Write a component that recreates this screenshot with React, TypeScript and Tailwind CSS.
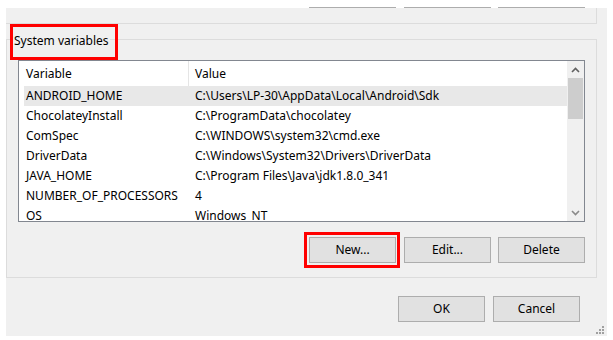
import React from "react";

const rows: [string, string][] = [
  ["ANDROID_HOME", "C:\\Users\\LP-30\\AppData\\Local\\Android\\Sdk"],
  ["ChocolateyInstall", "C:\\ProgramData\\chocolatey"],
  ["ComSpec", "C:\\WINDOWS\\system32\\cmd.exe"],
  ["DriverData", "C:\\Windows\\System32\\Drivers\\DriverData"],
  ["JAVA_HOME", "C:\\Program Files\\Java\\jdk1.8.0_341"],
  ["NUMBER_OF_PROCESSORS", "4"],
  ["OS", "Windows_NT"],
];

function WinButton({ label, className = "" }: { label: string; className?: string }) {
  return (
    <button
      className={`flex h-[26px] w-[87px] items-center justify-center border border-[#adadad] bg-[#e1e1e1] ${className}`}
    >
      {label}
    </button>
  );
}

function Chevron({ up, color }: { up?: boolean; color: string }) {
  return (
    <svg width="9" height="6" viewBox="0 0 9 6">
      <path
        d={up ? "M1 5 L4.5 1.5 L8 5" : "M1 1 L4.5 4.5 L8 1"}
        fill="none"
        stroke={color}
        strokeWidth="1.6"
      />
    </svg>
  );
}

export default function App() {
  return (
    <div className="h-[340px] w-[613px] overflow-hidden bg-white font-['Noto_Sans',sans-serif] text-[12px] text-black">
      {/* bottom edges of the user variables buttons above */}
      <div className="flex h-[8px] items-end pl-[309px]">
        <div className="h-px w-[87px] bg-[#adadad]" />
        <div className="ml-[8px] h-px w-[87px] bg-[#adadad]" />
        <div className="ml-[7px] h-px w-[87px] bg-[#adadad]" />
      </div>

      <div className="relative ml-[6px] flex h-[328px] w-[601px] flex-col bg-[#f0f0f0]">
        {/* end of the user variables group */}
        <div className="h-[16px] w-[591px] border-r border-b border-[#dcdcdc]" />

        {/* System variables group */}
        <div className="relative mt-[15px] h-[239px] w-[591px] border border-[#dcdcdc] pt-[20px] pl-[11px]">
          <span className="absolute -top-[8px] left-[6px] bg-[#f0f0f0] px-[1px] leading-[17px]">
            System variables
          </span>
          <span className="absolute -top-[16px] left-[3px] h-[36px] w-[108px] border-[3px] border-[#ff0000]" />

          {/* list view */}
          <div className="flex h-[162px] w-[567px] border border-[#828790] bg-white">
            <div className="flex-1 overflow-hidden pl-[5px]">
              <div className="flex h-[25px]">
                <div className="flex w-[165px] items-center border-r border-[#e5e5e5] pl-[2px]">Variable</div>
                <div className="flex items-center pl-[6px]">Value</div>
              </div>
              {rows.map(([name, value], i) => (
                <div
                  key={name}
                  className={`flex h-[20px] items-center whitespace-nowrap ${i === 0 ? "bg-[#e8e8e8]" : ""}`}
                >
                  <div className="w-[165px] pl-[2px]">{name}</div>
                  <div className="pl-[6px]">{value}</div>
                </div>
              ))}
            </div>
            <div className="flex w-[17px] flex-col bg-[#f0f0f0]">
              <div className="flex h-[17px] items-center justify-center">
                <Chevron up color="#606060" />
              </div>
              <div className="mx-[1px] h-[41px] bg-[#cdcdcd]" />
              <div className="flex-1" />
              <div className="flex h-[17px] items-center justify-center">
                <Chevron color="#8a8a8a" />
              </div>
            </div>
          </div>

          <div className="mt-[15px] flex justify-end pr-[11px]">
            <div className="relative">
              <WinButton label="New..." />
              <span className="absolute -top-[5px] -left-[5px] h-[36px] w-[96px] border-[3px] border-[#ff0000]" />
            </div>
            <WinButton label="Edit..." className="ml-[8px]" />
            <WinButton label="Delete" className="ml-[7px]" />
          </div>
        </div>

        <div className="mt-[18px] flex justify-end pr-[27px]">
          <WinButton label="OK" />
          <WinButton label="Cancel" className="ml-[8px]" />
        </div>

        {/* resize grip */}
        <svg className="absolute right-[3px] bottom-[2px]" width="8" height="8" viewBox="0 0 8 8">
          <g fill="#a0a0a0">
            <rect x="6" y="0" width="2" height="2" />
            <rect x="3" y="3" width="2" height="2" />
            <rect x="6" y="3" width="2" height="2" />
            <rect x="0" y="6" width="2" height="2" />
            <rect x="3" y="6" width="2" height="2" />
            <rect x="6" y="6" width="2" height="2" />
          </g>
        </svg>
      </div>
    </div>
  );
}
